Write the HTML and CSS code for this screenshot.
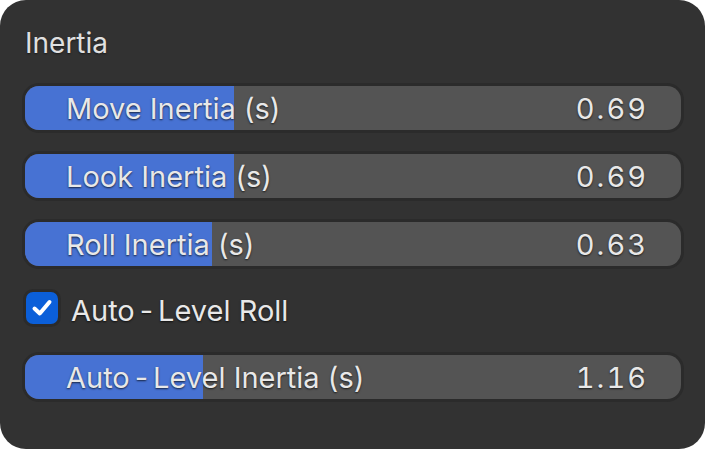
FILE: index.html
```html
<!DOCTYPE html>
<html lang="en">
<head>
  <meta charset="UTF-8">
  <title>Inertia</title>
  <link rel="stylesheet" href="styles.css">
</head>
<body>
  <div class="panel">
    <div class="title">Inertia</div>
    <div class="rows">
      <div class="slider">
        <div class="fill" style="width: 31.9%"></div>
        <span class="label">Move Inertia (s)</span>
        <span class="value">0.69</span>
      </div>
      <div class="slider">
        <div class="fill" style="width: 31.9%"></div>
        <span class="label">Look Inertia (s)</span>
        <span class="value">0.69</span>
      </div>
      <div class="slider">
        <div class="fill" style="width: 28.5%"></div>
        <span class="label">Roll Inertia (s)</span>
        <span class="value">0.63</span>
      </div>
      <label class="check">
        <span class="box">
          <svg width="22" height="22" viewBox="0 0 22 22"><path d="M3.5 11.5 L8.8 16.5 L18.5 5" fill="none" stroke="#fff" stroke-width="4" stroke-linecap="round" stroke-linejoin="round"/></svg>
        </span>
        <span class="check-label">Auto<span class="dash">-</span>Level Roll</span>
      </label>
      <div class="slider">
        <div class="fill" style="width: 27.1%"></div>
        <span class="label">Auto<span class="dash">-</span>Level Inertia (s)</span>
        <span class="value">1.16</span>
      </div>
    </div>
  </div>
</body>
</html>
```

FILE: styles.css
```css
body {
  margin: 0;
  background: #fff;
  font-family: Inter, "Noto Sans", sans-serif;
}
.panel {
  width: 705px;
  height: 449px;
  box-sizing: border-box;
  background: #323232;
  border-radius: 26px;
  padding: 24px 24px 0 25px;
  color: #e8e8e8;
}
.title {
  font-size: 28px;
  line-height: 38px;
  margin-bottom: 24px;
  color: #e0e0e0;
  text-shadow: 0 1px 2px rgba(0, 0, 0, 0.5);
}
.rows {
  display: flex;
  flex-direction: column;
  gap: 24px;
}
.slider {
  position: relative;
  height: 44px;
  background: #545454;
  border-radius: 14px;
  box-shadow: 0 0 0 3px #2b2b2b;
  overflow: hidden;
  display: flex;
  align-items: center;
  justify-content: space-between;
  padding: 0 35px 0 41px;
  font-size: 29px;
  text-shadow: 0 1px 2px rgba(0, 0, 0, 0.7);
}
.fill {
  position: absolute;
  left: 0;
  top: 0;
  bottom: 0;
  background: #4772d3;
}
.label, .value {
  position: relative;
}
.value {
  font-variant-numeric: tabular-nums;
  letter-spacing: 2px;
  margin-right: -2px;
}
.dash {
  margin: 0 5px;
}
.check {
  display: flex;
  align-items: center;
  height: 41px;
  gap: 13px;
  font-size: 29px;
  text-shadow: 0 1px 2px rgba(0, 0, 0, 0.7);
}
.box {
  width: 32px;
  height: 32px;
  margin: -6px 0 0 1px;
  border-radius: 7px;
  background: #0b5fd9;
  box-shadow: 0 0 0 3px #2b2b2b;
  display: flex;
  align-items: center;
  justify-content: center;
}
```
